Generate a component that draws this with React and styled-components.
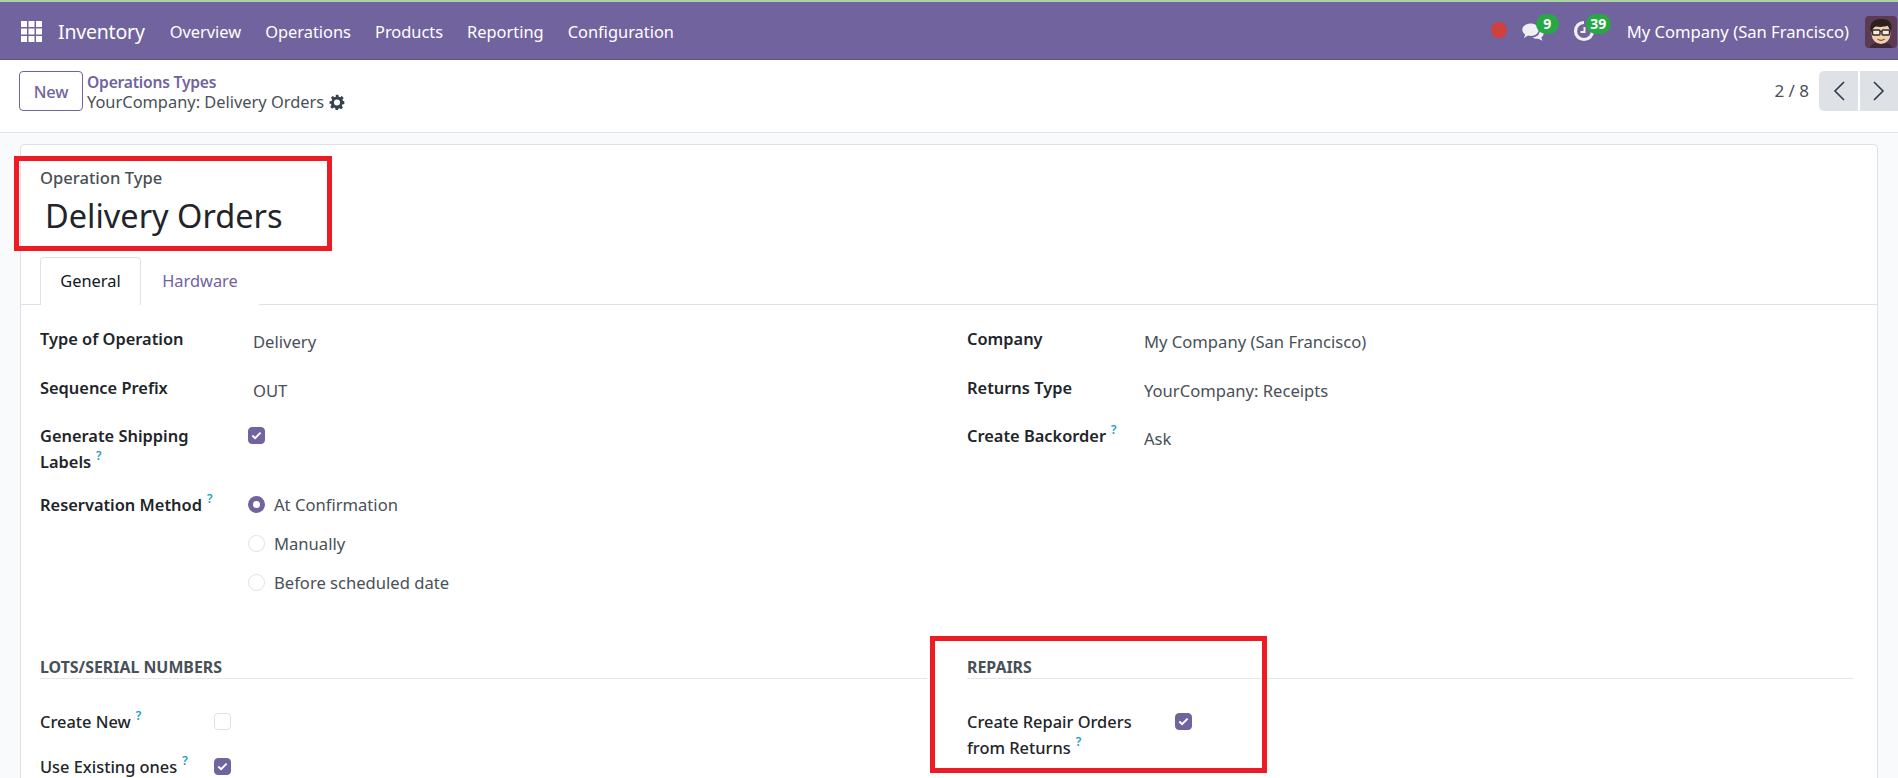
import React from "react";
import styled, { createGlobalStyle } from "styled-components";

const FONT = `"Noto Sans", "Open Sans", "Liberation Sans", sans-serif`;
const PURPLE = "#71639e";

const Global = createGlobalStyle`
  html, body { margin: 0; padding: 0; height: 100%; overflow: hidden; background: #f9fafb; }
  * { box-sizing: border-box; }
  body { font-family: ${FONT}; color: #212529; }
`;

const Page = styled.div`
  position: relative;
  height: 778px;
  overflow: hidden;
  background: #f9fafb;
  border-top: 2px solid #a9d3a5;
`;

const TopBar = styled.header`
  height: 58px;
  display: flex;
  align-items: center;
  background: #71639e;
  border-bottom: 1px solid #5f5387;
  color: #fff;
  padding: 2px 1px 0 21px;
`;
const AppsIcon = styled.svg`
  width: 21px;
  height: 21px;
  margin-right: 16px;
  flex: none;
`;
const Brand = styled.span`
  font-size: 19.5px;
  margin-right: 25px;
  letter-spacing: -0.2px;
`;
const MenuItem = styled.span`
  font-size: 16.4px;
  margin-right: 24px;
`;
const Spacer = styled.div`
  flex: 1;
`;
const RecDot = styled.span`
  width: 16px;
  height: 16px;
  border-radius: 50%;
  background: #d23f3f;
  margin-right: 14px;
  margin-top: -4px;
`;
const Systray = styled.span`
  position: relative;
  display: flex;
  width: ${(p) => p.$w}px;
  height: 24px;
  margin-right: ${(p) => p.$mr}px;
`;
const Badge = styled.span`
  position: absolute;
  left: ${(p) => p.$l}px;
  top: -6px;
  height: 20px;
  min-width: ${(p) => p.$w}px;
  padding: 0 4px;
  border-radius: 10px;
  background: #28a745;
  color: #fff;
  font-size: 14px;
  font-weight: 700;
  line-height: 19px;
  text-align: center;
`;
const CompanyName = styled.span`
  font-size: 16.6px;
  margin-right: 16px;
`;
const Avatar = styled.svg`
  width: 32px;
  height: 32px;
  border-radius: 4px;
  flex: none;
`;

const ControlPanel = styled.div`
  height: 73px;
  display: flex;
  align-items: flex-start;
  background: #fff;
  border-bottom: 1px solid #dee2e6;
  padding: 11px 0 0 19px;
`;
const NewButton = styled.button`
  width: 64px;
  height: 40px;
  border: 1px solid ${PURPLE};
  border-radius: 4px;
  background: #fff;
  color: ${PURPLE};
  font: 500 16.4px ${FONT};
  letter-spacing: -0.2px;
  padding: 0;
  flex: none;
`;
const Crumbs = styled.div`
  margin-left: 4px;
  padding-top: 1px;
  display: flex;
  flex-direction: column;
`;
const CrumbLink = styled.span`
  color: ${PURPLE};
  font-size: 15.6px;
  font-weight: 600;
  line-height: 20px;
  letter-spacing: -0.2px;
`;
const CrumbCurrent = styled.span`
  display: flex;
  align-items: center;
  gap: 5px;
  color: #495057;
  font-size: 16.4px;
  line-height: 20px;
`;
const Pager = styled.div`
  margin-left: auto;
  display: flex;
  align-items: center;
`;
const PagerCount = styled.span`
  font-size: 17px;
  color: #495057;
  margin-right: 10px;
  margin-top: -1px;
`;
const PagerButton = styled.button`
  width: ${(p) => p.$w}px;
  height: 40px;
  border: 0;
  padding: 0;
  background: #dee2e6;
  border-radius: ${(p) => (p.$first ? "5px 0 0 5px" : "0")};
  margin-left: ${(p) => (p.$first ? 0 : 2)}px;
  display: flex;
  align-items: center;
  justify-content: center;
  color: #2f3a4a;
`;

const Sheet = styled.main`
  margin: 11px 20px 0;
  height: 700px;
  background: #fff;
  border: 1px solid #dee2e6;
  border-radius: 4px 4px 0 0;
`;
const TitleBlock = styled.div`
  padding: 22px 19px 0;
  height: 112px;
`;
const TitleLabel = styled.div`
  font-size: 16.6px;
  font-weight: 500;
  line-height: 22px;
  color: #495057;
`;
const Title = styled.h1`
  margin: 5px 0 0 5px;
  font-size: 32.5px;
  font-weight: 400;
  line-height: 44px;
  color: #212529;
`;
const Tabs = styled.nav`
  display: flex;
  height: 48px;
  padding-left: 19px;
  border-bottom: 1px solid #dee2e6;
`;
const Tab = styled.span`
  width: ${(p) => p.$w}px;
  height: 48px;
  text-align: center;
  font-size: 16.4px;
  line-height: 46px;
  color: ${(p) => (p.$active ? "#111827" : PURPLE)};
  background: #fff;
  border: 1px solid ${(p) => (p.$active ? "#dee2e6" : "transparent")};
  border-bottom: 0;
  border-radius: 4px 4px 0 0;
`;
const Columns = styled.div`
  display: grid;
  grid-template-columns: 1fr 1fr;
  column-gap: 40px;
  padding: 21px 23px 0 19px;
`;
const Column = styled.section`
  display: flex;
  flex-direction: column;
`;
const Row = styled.div`
  display: flex;
  align-items: flex-start;
  height: ${(p) => p.$h}px;
  margin-top: ${(p) => p.$mt || 0}px;
`;
const Label = styled.div`
  width: ${(p) => p.$w || 213}px;
  flex: none;
  white-space: nowrap;
  font-size: 16.4px;
  font-weight: ${(p) => (p.$light ? 500 : 600)};
  line-height: 26px;
  color: #212529;
`;
const Value = styled.div`
  font-size: 16.6px;
  line-height: 26px;
  padding-top: 3px;
  color: #495057;
`;
const Hint = styled.sup`
  font-size: 12px;
  font-weight: 600;
  color: #1a9cc4;
  line-height: 0;
  margin-left: 5px;
  top: -8px;
  position: relative;
  vertical-align: baseline;
`;
const Box = styled.span`
  display: flex;
  align-items: center;
  justify-content: center;
  width: 17px;
  height: 17px;
  margin-left: ${(p) => p.$ml || 0}px;
  margin-top: 4px;
  border-radius: 4px;
  flex: none;
  background: ${(p) => (p.$on ? PURPLE : "#fff")};
  border: 1px solid ${(p) => (p.$on ? PURPLE : "#dee2e6")};
`;
const Radios = styled.div`
  display: flex;
  flex-direction: column;
  margin-left: -5px;
`;
const RadioRow = styled.div`
  display: flex;
  align-items: center;
  height: 39px;
  margin-top: -7px;
  margin-bottom: 7px;
  font-size: 16.6px;
  color: #495057;
`;
const Radio = styled.span`
  width: 17px;
  height: 17px;
  border-radius: 50%;
  margin-right: 9px;
  background: #fff;
  border: ${(p) => (p.$on ? `5px solid ${PURPLE}` : "1px solid #dee2e6")};
`;
const SectionHead = styled.h3`
  margin: 0;
  height: 22px;
  font-size: 15.9px;
  font-weight: 700;
  line-height: 20px;
  color: #495057;
  border-bottom: 1px solid #e5e7eb;
`;
const RedBox = styled.div`
  position: absolute;
  left: ${(p) => p.$x}px;
  top: ${(p) => p.$y}px;
  width: ${(p) => p.$w}px;
  height: ${(p) => p.$h}px;
  border: 5px solid #ed1c24;
  pointer-events: none;
`;

const Check = () => (
  <svg width="11" height="9" viewBox="0 0 11 9" fill="none">
    <path d="M1.3 4.6 4.1 7.2 9.6 1.6" stroke="#fff" strokeWidth="2" />
  </svg>
);
const Gear = () => (
  <svg width="16" height="16" viewBox="0 0 24 24" fill="#374151">
    <path fillRule="evenodd" d="M10 1h4l.6 3.1 2 .8 2.6-1.8 2.8 2.8-1.8 2.6.8 2L23 11v4l-3 .6-.8 2 1.800 2.600-2.800 2.800-2.600-1.800-2 .8L13.900 24h-4l-.6-3-2-.8-2.600 1.800-2.800-2.800 1.800-2.600-.8-2L.9 15v-4l3-.6.8-2L2.900 5.800l2.800-2.800 2.600 1.800 2-.8zM12 8.200a4.600 4.600 0 1 0 0 9.200 4.600 4.600 0 0 0 0-9.200z" />
  </svg>
);

export default function App() {
  return (
    <>
      <Global />
      <Page>
        <TopBar>
          <AppsIcon viewBox="0 0 21 21" fill="#fff">
            {[0, 7.5, 15].flatMap((y) =>
              [0, 7.5, 15].map((x) => <rect key={`${x}-${y}`} x={x} y={y} width="6" height="6" />)
            )}
          </AppsIcon>
          <Brand>Inventory</Brand>
          {["Overview", "Operations", "Products", "Reporting", "Configuration"].map((m) => (
            <MenuItem key={m}>{m}</MenuItem>
          ))}
          <Spacer />
          <RecDot />
          <Systray $w={38} $mr={14}>
            <svg width="24" height="24" viewBox="0 0 24 24" fill="#eef0f6">
              <path d="M9.500 3.500c4.600 0 8.200 2.700 8.200 6.200s-3.600 6.200-8.200 6.200c-.9 0-1.700-.1-2.500-.3L3 18l1.200-3.600C2.300 13.200 1.300 11.600 1.300 9.700c0-3.500 3.600-6.200 8.200-6.200z" />
              <path d="M19.300 8.500c2.100 1 3.400 2.800 3.400 4.800 0 1.700-.9 3.200-2.400 4.200l1.100 3.300-4-2.100c-2.200.3-4.500-.2-6.100-1.300 4.300.1 8.100-3 8-8.900z" />
            </svg>
            <Badge $l={15} $w={23}>9</Badge>
          </Systray>
          <Systray $w={38} $mr={16}>
            <svg width="22" height="22" viewBox="0 0 22 22" fill="none" stroke="#eef0f6">
              <path d="M11 2.500a8.500 8.500 0 1 0 8.500 8.500" strokeWidth="3.200" />
              <path d="M11.500 7v5H7.500" strokeWidth="2" />
            </svg>
            <Badge $l={13} $w={25}>39</Badge>
          </Systray>
          <CompanyName>My Company (San Francisco)</CompanyName>
          <Avatar viewBox="0 0 32 32">
            <rect width="32" height="32" fill="#5b3a52" />
            <path d="M5 32c1-4 5-6 11-6s10 2 11 6z" fill="#3d2a3a" />
            <ellipse cx="16" cy="17.500" rx="9.500" ry="10.500" fill="#f4cfae" />
            <path d="M5.500 15C4 7 9 2.500 17 3c6-.5 10.500 3.500 9.500 11l-2-.5c-.5-2-.5-3-1.500-4-4 1.800-9 1.500-12.500 1-2 1-3 3-3.500 4.500z" fill="#2b2220" />
            <rect x="7.500" y="14" width="7.500" height="5" rx="1" fill="#fbe9da" stroke="#2b2b2b" strokeWidth="1.400" />
            <rect x="17" y="14" width="7.500" height="5" rx="1" fill="#fbe9da" stroke="#2b2b2b" strokeWidth="1.400" />
            <path d="M15 15.500h2" stroke="#2b2b2b" strokeWidth="1.200" />
            <path d="M12.500 23c2 1.500 5 1.500 7 0" stroke="#8a4a3a" strokeWidth="1.200" fill="none" />
          </Avatar>
        </TopBar>

        <ControlPanel>
          <NewButton>New</NewButton>
          <Crumbs>
            <CrumbLink>Operations Types</CrumbLink>
            <CrumbCurrent>YourCompany: Delivery Orders <Gear /></CrumbCurrent>
          </Crumbs>
          <Pager>
            <PagerCount>2 / 8</PagerCount>
            <PagerButton $first $w={39}>
              <svg width="14" height="22" viewBox="0 0 14 22" fill="none" stroke="currentColor" strokeWidth="1.600"><path d="M12 2 3 11l9 9" /></svg>
            </PagerButton>
            <PagerButton $w={38}>
              <svg width="14" height="22" viewBox="0 0 14 22" fill="none" stroke="currentColor" strokeWidth="1.600"><path d="m2 2 9 9-9 9" /></svg>
            </PagerButton>
          </Pager>
        </ControlPanel>

        <Sheet>
          <TitleBlock>
            <TitleLabel>Operation Type</TitleLabel>
            <Title>Delivery Orders</Title>
          </TitleBlock>
          <Tabs>
            <Tab $active $w={101}>General</Tab>
            <Tab $w={118}>Hardware</Tab>
          </Tabs>
          <Columns>
            <Column>
              <Row $h={49}><Label>Type of Operation</Label><Value>Delivery</Value></Row>
              <Row $h={48}><Label>Sequence Prefix</Label><Value>OUT</Value></Row>
              <Row $h={69}><Label>Generate Shipping<br />Labels<Hint>?</Hint></Label><Box $on $ml={-5}><Check /></Box></Row>
              <Row $h={165}>
                <Label>Reservation Method<Hint>?</Hint></Label>
                <Radios>
                  <RadioRow><Radio $on />At Confirmation</RadioRow>
                  <RadioRow><Radio />Manually</RadioRow>
                  <RadioRow><Radio />Before scheduled date</RadioRow>
                </Radios>
              </Row>
              <SectionHead>LOTS/SERIAL NUMBERS</SectionHead>
              <Row $h={45} $mt={30}><Label $light $w={174}>Create New<Hint>?</Hint></Label><Box /></Row>
              <Row $h={40}><Label $light $w={174}>Use Existing ones<Hint>?</Hint></Label><Box $on><Check /></Box></Row>
            </Column>
            <Column>
              <Row $h={49}><Label $w={177}>Company</Label><Value>My Company (San Francisco)</Value></Row>
              <Row $h={48}><Label $w={177}>Returns Type</Label><Value>YourCompany: Receipts</Value></Row>
              <Row $h={69}><Label $w={177}>Create Backorder<Hint>?</Hint></Label><Value>Ask</Value></Row>
              <Row $h={165} />
              <SectionHead>REPAIRS</SectionHead>
              <Row $h={60} $mt={30}><Label $light $w={208}>Create Repair Orders<br />from Returns<Hint>?</Hint></Label><Box $on><Check /></Box></Row>
            </Column>
          </Columns>
        </Sheet>
        <RedBox $x={14} $y={154} $w={318} $h={95} />
        <RedBox $x={930} $y={634} $w={337} $h={137} />
      </Page>
    </>
  );
}
